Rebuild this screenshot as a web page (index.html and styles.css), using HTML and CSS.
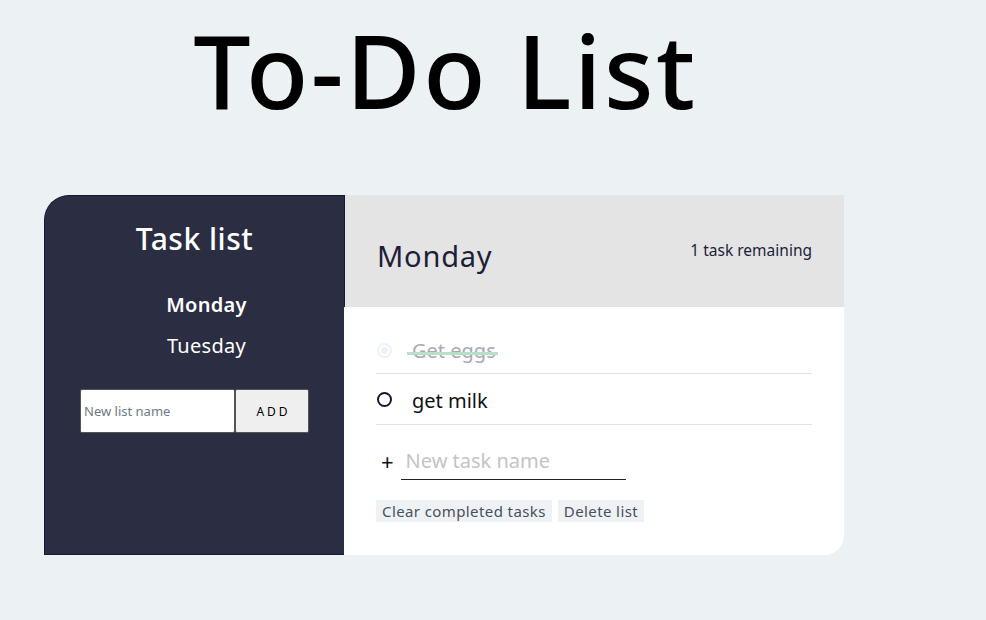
FILE: index.html
```html
<!DOCTYPE html>
<html>
<head>
<meta charset="utf-8">
<link rel="stylesheet" href="styles.css">
</head>
<body>
<div class="wrap">
  <h1 class="title">To-Do List</h1>
  <div class="card">
    <aside class="sidebar">
      <h2 class="side-title">Task list</h2>
      <ul class="lists">
        <li class="list-name active">Monday</li>
        <li class="list-name">Tuesday</li>
      </ul>
      <form class="new-list">
        <input class="new-list-input" type="text" placeholder="New list name">
        <button class="add-btn" type="button">ADD</button>
      </form>
    </aside>
    <section class="main">
      <header class="main-head">
        <h2 class="main-title">Monday</h2>
        <p class="remaining">1 task remaining</p>
      </header>
      <div class="main-body">
        <div class="task done">
          <span class="check checked"></span>
          <span class="task-label"><span class="strike"></span>Get eggs</span>
        </div>
        <div class="task">
          <span class="check"></span>
          <span class="task-label">get milk</span>
        </div>
        <div class="new-task">
          <span class="plus">+</span>
          <input class="new-task-input" type="text" placeholder="New task name">
        </div>
        <div class="actions">
          <button class="act-btn" type="button">Clear completed tasks</button>
          <button class="act-btn" type="button">Delete list</button>
        </div>
      </div>
    </section>
  </div>
</div>
</body>
</html>
```
FILE: styles.css
```css
* { box-sizing: border-box; }
html, body { margin: 0; padding: 0; }
body {
  background: #ecf1f4;
  font-family: "Noto Sans", "Open Sans", sans-serif;
  color: #000;
  width: 986px;
  height: 620px;
  overflow: hidden;
}
.wrap {
  width: 800px;
  margin-left: 44px;
}
.title {
  margin: 0 0 56px;
  padding: 0 0 0 3px;
  text-align: center;
  font-size: 102px;
  font-weight: 500;
  line-height: 139px;
  letter-spacing: 2.5px;
}
.card {
  display: flex;
  height: 360px;
}
.sidebar {
  width: 300px;
  background: #2b2d42;
  border: 1px solid #161a3a;
  border-right: none;
  border-top-left-radius: 25px;
  color: #fff;
  display: flex;
  flex-direction: column;
  align-items: center;
}
.side-title {
  margin: 25px 0 0;
  font-size: 30px;
  font-weight: 500;
  line-height: 36px;
  letter-spacing: 0.5px;
}
.lists {
  list-style: none;
  margin: 27px 0 0 24px;
  padding: 0;
  text-align: center;
}
.list-name {
  font-size: 20px;
  line-height: 41px;
  letter-spacing: 0.3px;
}
.list-name.active { font-weight: 600; }
.new-list {
  display: flex;
  margin: 23px 0 0 0;
}
.new-list-input {
  width: 155px;
  height: 44px;
  border: 1px solid #555;
  border-radius: 2px;
  padding: 0 3px;
  font-family: inherit;
  font-size: 13px;
  color: #333;
  background: #fff;
}
.new-list-input::placeholder { color: #6f7a86; }
.add-btn {
  width: 74px;
  height: 44px;
  border: 1px solid #555;
  border-radius: 2px;
  background: #efefef;
  font-family: inherit;
  font-size: 12px;
  letter-spacing: 3px;
  color: #000;
  padding: 0 0 0 3px;
}
.main {
  width: 500px;
  display: flex;
  flex-direction: column;
}
.main-head {
  height: 112px;
  background: #e4e4e4;
  border-left: 1px solid #161a3a;
  display: flex;
  justify-content: space-between;
  align-items: center;
  padding: 0 32px 0 32px;
}
.main-title {
  margin: 8px 0 0;
  font-size: 29px;
  font-weight: 400;
  color: #1c1f3a;
  letter-spacing: 0.8px;
}
.remaining {
  margin: 0 0 2px;
  font-size: 15.5px;
  color: #1c1f3a;
}
.main-body {
  flex: 1;
  background: #fff;
  border-bottom-right-radius: 20px;
  padding: 21px 32px 0 32px;
}
.task {
  display: flex;
  align-items: center;
  height: 51px;
  border-bottom: 1px solid #e3e3e3;
  padding-left: 1px;
}
.task.done { height: 46px; }
.task:not(.done) .task-label { margin-top: 3px; }
.check {
  width: 15px;
  height: 15px;
  border: 2px solid #151835;
  border-radius: 50%;
  margin-right: 20px;
  flex: none;
}
.check.checked {
  border-color: #eef2f5;
  background: radial-gradient(circle, #eef2f5 0 3px, #fff 4px);
}
.task-label {
  font-size: 20px;
  color: #111;
  position: relative;
}
.done .task-label {
  color: #a7abb3;
}
.strike {
  position: absolute;
  left: -5px;
  right: -2px;
  top: 15px;
  height: 3px;
  background: #b8e0c6;
}
.new-task {
  display: flex;
  align-items: flex-end;
  margin-top: 19px;
  height: 36px;
}
.plus {
  font-size: 22px;
  line-height: 26px;
  margin: 0 7px 6px 5px;
  color: #111;
}
.new-task-input {
  width: 225px;
  height: 36px;
  border: none;
  border-bottom: 1px solid #222;
  padding: 0 5px 3px;
  font-family: inherit;
  font-size: 20px;
  background: transparent;
}
.new-task-input::placeholder { color: #c4c4c4; }
.actions {
  display: flex;
  gap: 6px;
  margin-top: 20px;
}
.act-btn {
  height: 22px;
  border: none;
  background: #eef2f5;
  font-family: inherit;
  font-size: 15px;
  color: #4a4f5c;
  padding: 0 6px;
  letter-spacing: 0.4px;
}
```
